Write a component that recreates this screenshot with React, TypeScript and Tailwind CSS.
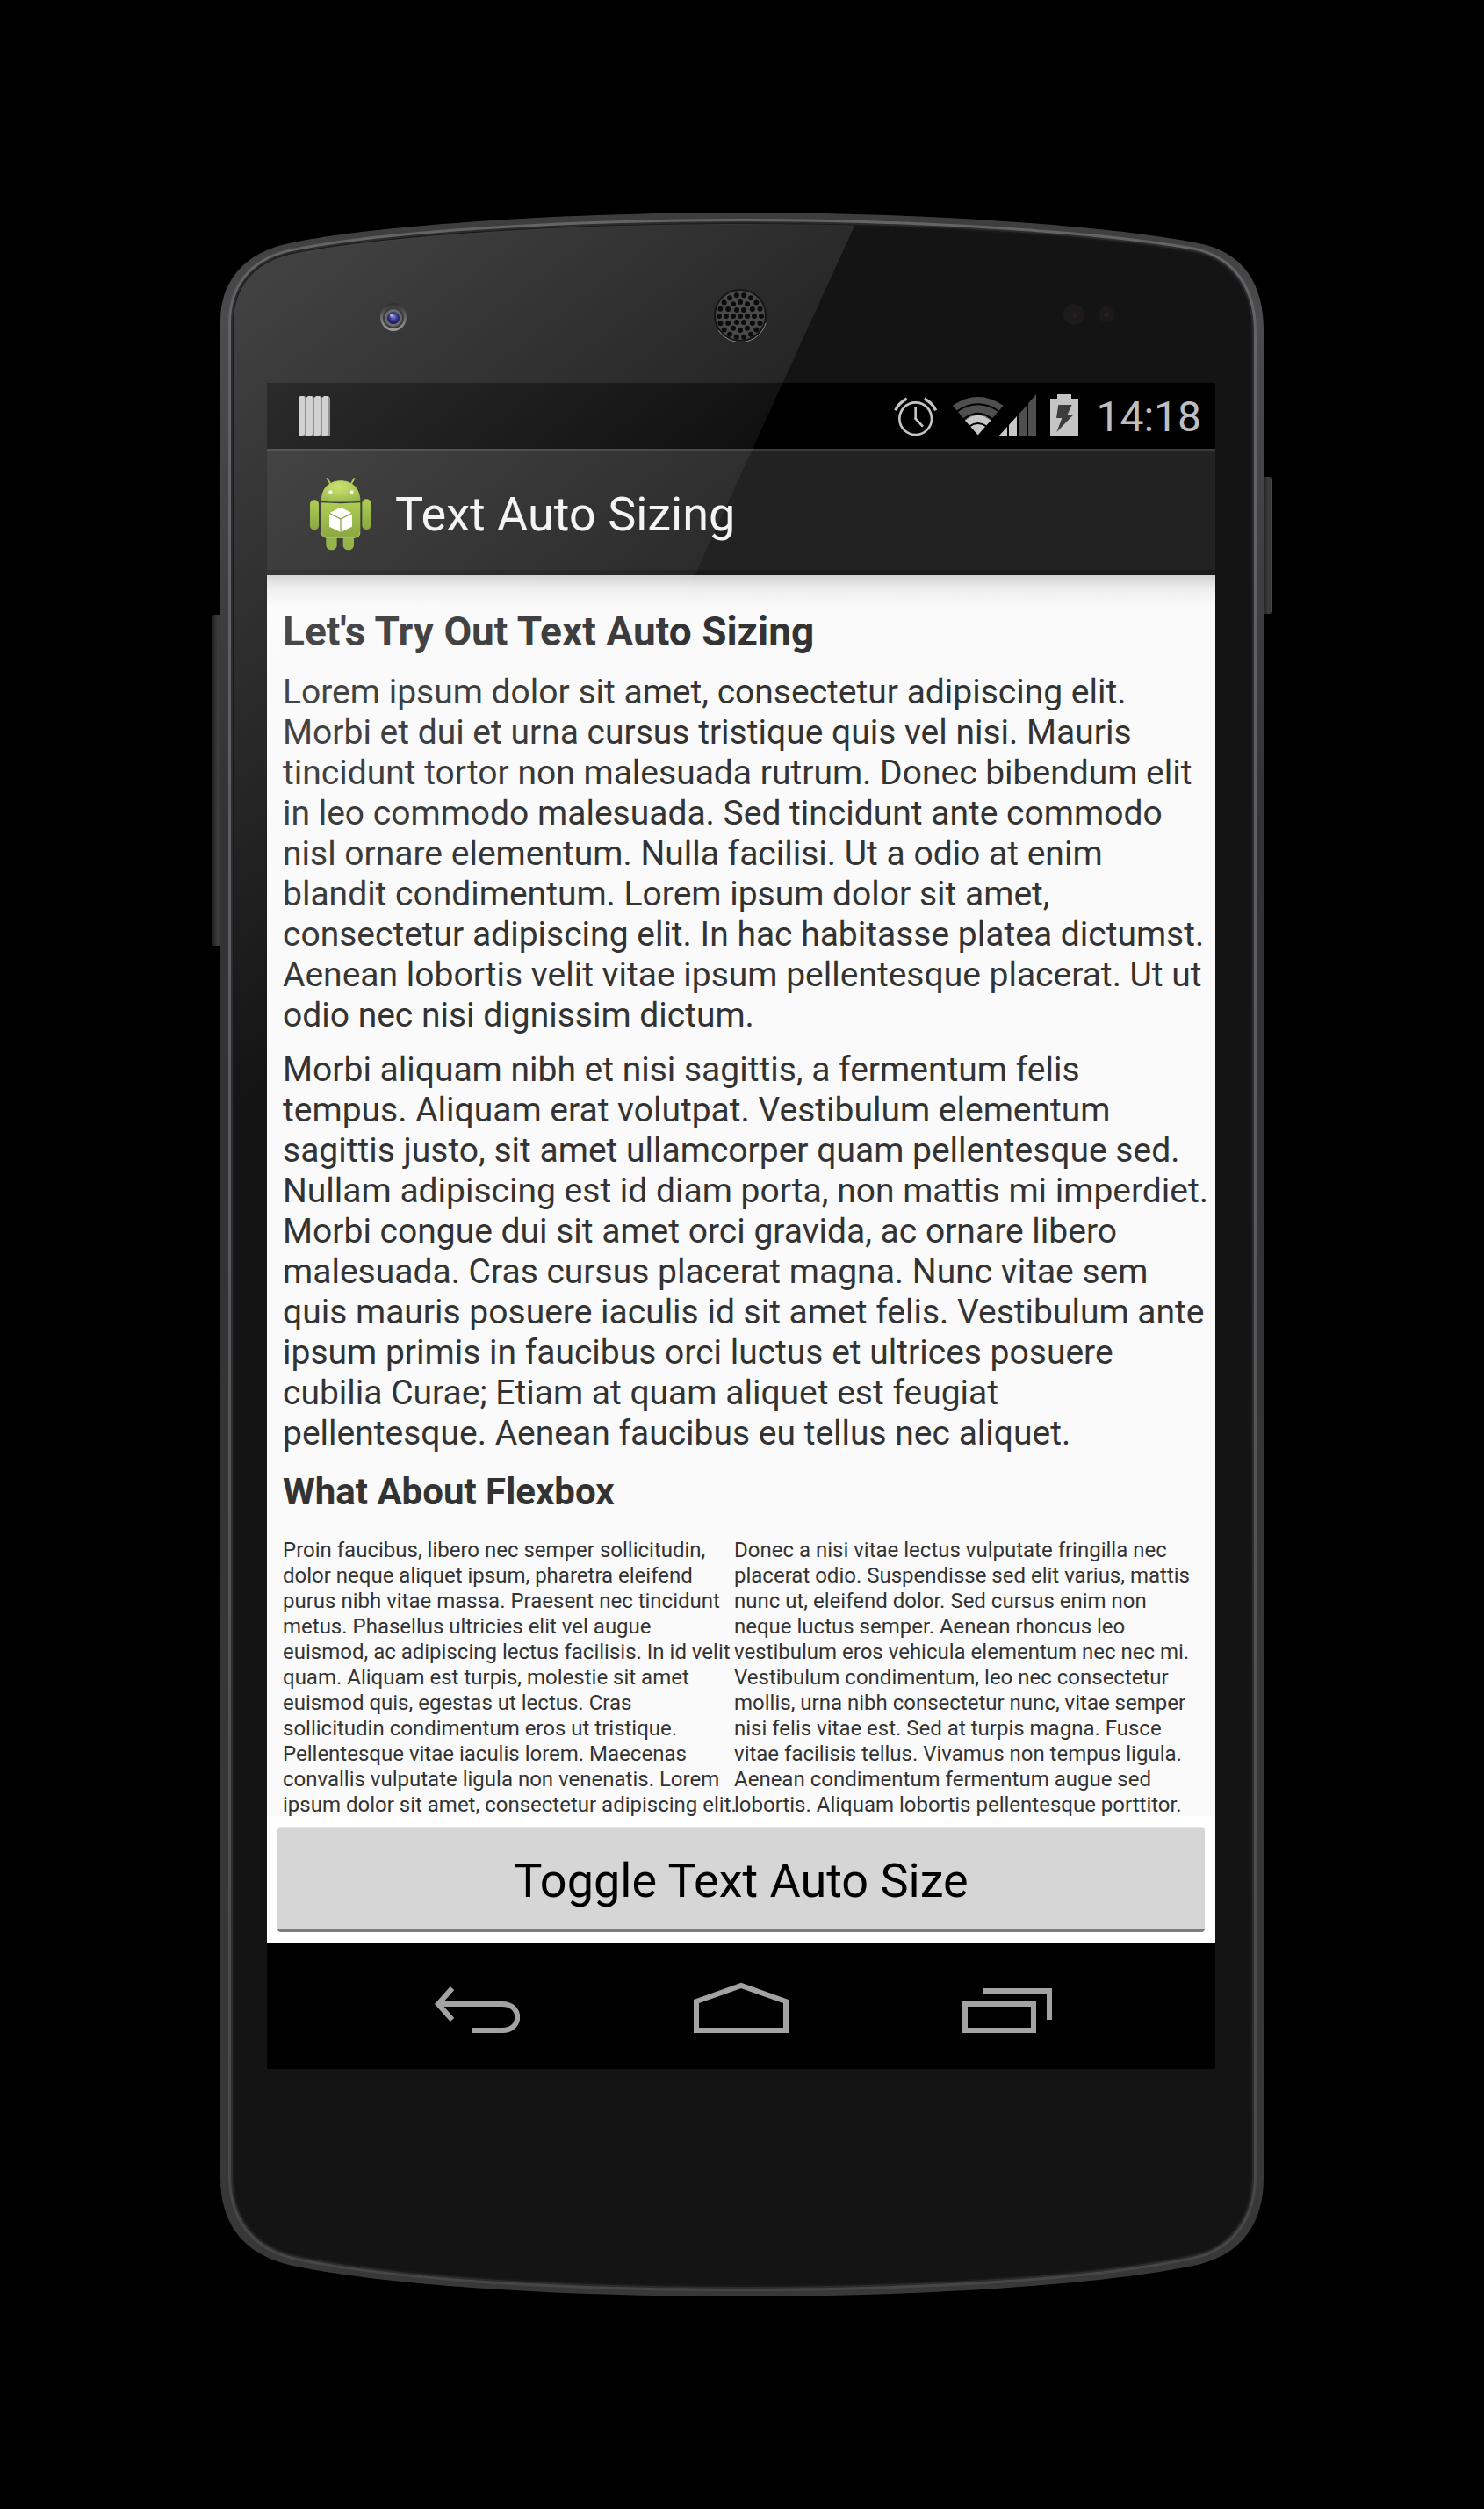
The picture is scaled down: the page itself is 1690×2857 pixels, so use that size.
import React from "react";

const PARAGRAPH_ONE = [
  "Lorem ipsum dolor sit amet, consectetur adipiscing elit.",
  "Morbi et dui et urna cursus tristique quis vel nisi. Mauris",
  "tincidunt tortor non malesuada rutrum. Donec bibendum elit",
  "in leo commodo malesuada. Sed tincidunt ante commodo",
  "nisl ornare elementum. Nulla facilisi. Ut a odio at enim",
  "blandit condimentum. Lorem ipsum dolor sit amet,",
  "consectetur adipiscing elit. In hac habitasse platea dictumst.",
  "Aenean lobortis velit vitae ipsum pellentesque placerat. Ut ut",
  "odio nec nisi dignissim dictum.",
];

const PARAGRAPH_TWO = [
  "Morbi aliquam nibh et nisi sagittis, a fermentum felis",
  "tempus. Aliquam erat volutpat. Vestibulum elementum",
  "sagittis justo, sit amet ullamcorper quam pellentesque sed.",
  "Nullam adipiscing est id diam porta, non mattis mi imperdiet.",
  "Morbi congue dui sit amet orci gravida, ac ornare libero",
  "malesuada. Cras cursus placerat magna. Nunc vitae sem",
  "quis mauris posuere iaculis id sit amet felis. Vestibulum ante",
  "ipsum primis in faucibus orci luctus et ultrices posuere",
  "cubilia Curae; Etiam at quam aliquet est feugiat",
  "pellentesque. Aenean faucibus eu tellus nec aliquet.",
];

const COLUMN_ONE = [
  "Proin faucibus, libero nec semper sollicitudin,",
  "dolor neque aliquet ipsum, pharetra eleifend",
  "purus nibh vitae massa. Praesent nec tincidunt",
  "metus. Phasellus ultricies elit vel augue",
  "euismod, ac adipiscing lectus facilisis. In id velit",
  "quam. Aliquam est turpis, molestie sit amet",
  "euismod quis, egestas ut lectus. Cras",
  "sollicitudin condimentum eros ut tristique.",
  "Pellentesque vitae iaculis lorem. Maecenas",
  "convallis vulputate ligula non venenatis. Lorem",
  "ipsum dolor sit amet, consectetur adipiscing elit.",
];

const COLUMN_TWO = [
  "Donec a nisi vitae lectus vulputate fringilla nec",
  "placerat odio. Suspendisse sed elit varius, mattis",
  "nunc ut, eleifend dolor. Sed cursus enim non",
  "neque luctus semper. Aenean rhoncus leo",
  "vestibulum eros vehicula elementum nec nec mi.",
  "Vestibulum condimentum, leo nec consectetur",
  "mollis, urna nibh consectetur nunc, vitae semper",
  "nisi felis vitae est. Sed at turpis magna. Fusce",
  "vitae facilisis tellus. Vivamus non tempus ligula.",
  "Aenean condimentum fermentum augue sed",
  "lobortis. Aliquam lobortis pellentesque porttitor.",
];

function Lines({ lines }: { lines: string[] }) {
  return (
    <>
      {lines.map((line) => (
        <span key={line} className="block whitespace-nowrap">
          {line}{" "}
        </span>
      ))}
    </>
  );
}

const OUTER =
  "M251 420 V365 C251 322 277 289 325 278 C420 257 640 242 845 242 C1050 242 1265 257 1365 277 C1417 287 1439 325 1439 375 V2480 C1439 2530 1416 2566 1364 2579 C1250 2603 1040 2615 845 2615 C650 2615 450 2604 333 2580 C275 2567 251 2530 251 2480 Z";
const GLASS =
  "M266 420 V368 C266 328 288 300 329 290 C430 268 650 255 845 255 C1040 255 1250 268 1361 288 C1404 298 1425 332 1425 378 V2478 C1425 2520 1404 2557 1358 2567 C1240 2592 1040 2603 845 2603 C650 2603 450 2592 338 2568 C288 2557 266 2522 266 2478 Z";

function PhoneFrame() {
  return (
    <svg
      aria-hidden="true"
      viewBox="240 240 1210 2378"
      preserveAspectRatio="none"
      className="absolute inset-0 h-full w-full"
    >
      <defs>
        <linearGradient id="rim" x1="0" y1="0" x2="0" y2="1">
          <stop offset="0" stopColor="#3d3c3d" />
          <stop offset="0.05" stopColor="#4c4b4d" />
          <stop offset="0.3" stopColor="#323234" />
          <stop offset="1" stopColor="#383838" />
        </linearGradient>
        <linearGradient id="rim-highlight" x1="0" y1="0" x2="0" y2="1">
          <stop offset="0" stopColor="#646366" />
          <stop offset="0.35" stopColor="#5e5d62" />
          <stop offset="1" stopColor="#464646" />
        </linearGradient>
        <linearGradient id="key" x1="0" y1="0" x2="1" y2="0">
          <stop offset="0" stopColor="#1c1c1c" />
          <stop offset="0.6" stopColor="#3e3e3e" />
          <stop offset="1" stopColor="#262626" />
        </linearGradient>
      </defs>
      <rect x="241" y="700" width="12" height="377" rx="2" fill="url(#key)" />
      <rect x="1438" y="543" width="11" height="156" rx="2" fill="url(#key)" />
      <path d="M1448 545V697" stroke="#6a6a6a" strokeWidth="1" />
      <path d={OUTER} fill="url(#rim)" />
      <path d={GLASS} fill="none" stroke="url(#rim-highlight)" strokeWidth="12" />
      <path d={GLASS} fill="none" stroke="#2c2c2e" strokeWidth="6" />
      <path d={GLASS} fill="#141414" stroke="#19191a" strokeWidth="2" />
    </svg>
  );
}

function earpieceHoles() {
  const holes: { x: number; y: number }[] = [{ x: 843, y: 360 }];
  [
    [8, 6],
    [16, 12],
    [24, 18],
  ].forEach(([radius, count]) => {
    for (let i = 0; i < count; i += 1) {
      const angle = (i / count) * Math.PI * 2;
      holes.push({
        x: 843 + radius * Math.cos(angle),
        y: 360 + radius * Math.sin(angle),
      });
    }
  });
  return holes;
}

function PhoneGloss() {
  return (
    <svg
      aria-hidden="true"
      viewBox="240 240 1210 2378"
      preserveAspectRatio="none"
      className="pointer-events-none absolute inset-0 h-full w-full"
    >
      <defs>
        <linearGradient
          id="gloss"
          gradientUnits="userSpaceOnUse"
          x1="266"
          y1="360"
          x2="706"
          y2="929"
        >
          <stop offset="0" stopColor="#fff" stopOpacity="0.19" />
          <stop offset="1" stopColor="#fff" stopOpacity="0" />
        </linearGradient>
        <clipPath id="glass-clip">
          <path d={GLASS} />
        </clipPath>
        <radialGradient id="lens" cx="0.5" cy="0.4" r="0.6">
          <stop offset="0" stopColor="#8a94b8" />
          <stop offset="0.5" stopColor="#3a38a0" />
          <stop offset="1" stopColor="#15152c" />
        </radialGradient>
        <linearGradient id="ring" x1="0" y1="0" x2="0" y2="1">
          <stop offset="0" stopColor="#2e2e2e" />
          <stop offset="1" stopColor="#a0a0a0" />
        </linearGradient>
      </defs>
      <path
        d="M240 240 H981 L496 1300 H240 Z"
        fill="url(#gloss)"
        clipPath="url(#glass-clip)"
      />
      <ellipse cx="448" cy="361" rx="15" ry="16" fill="url(#ring)" />
      <circle cx="448" cy="362" r="12" fill="#3d3d3e" />
      <circle cx="448" cy="362" r="10" fill="#6a6a6c" />
      <circle cx="448" cy="362" r="7" fill="url(#lens)" />
      <circle cx="446" cy="359" r="2" fill="#aab2cc" />
      <circle cx="843" cy="359" r="29" fill="#4a4a4a" stroke="#151515" strokeWidth="2" />
      <path d="M818 376 A30 30 0 0 0 872 368" fill="none" stroke="#8a8a8a" strokeWidth="1" />
      {earpieceHoles().map((hole, index) => (
        <circle key={index} cx={hole.x} cy={hole.y} r="3" fill="#0b0b0b" />
      ))}
      <circle cx="1223" cy="358" r="12" fill="#1c1b1b" />
      <circle cx="1224" cy="359" r="3" fill="#2c1e1b" />
      <circle cx="1260" cy="358" r="9" fill="#1b1a1a" />
      <circle cx="1260" cy="358" r="3" fill="#2c1e1b" />
    </svg>
  );
}

function LogIcon() {
  return (
    <svg aria-hidden="true" viewBox="0 0 36 46" className="h-[46px] w-9">
      {[0, 9, 18, 27].map((x) => (
        <g key={x}>
          <path d={`M${x} 2l2-2h5l2 2v44H${x}z`} fill="#7d7d7d" />
          <path d={`M${x} 2l2-2h4l1 2v41l-2 2H${x}z`} fill="#cacaca" />
        </g>
      ))}
    </svg>
  );
}

function AlarmIcon() {
  return (
    <svg aria-hidden="true" viewBox="83 60 147 138" className="h-[46px] w-[49px]" fill="none" stroke="#c4c4c4">
      <circle cx="157" cy="137" r="55" strokeWidth="8" />
      <path d="M157 97V139" strokeWidth="8" />
      <path d="M155 135L182 164" strokeWidth="8" />
      <path d="M88 109Q99 84 127 69" strokeWidth="10" />
      <path d="M226 109Q215 84 187 69" strokeWidth="10" />
    </svg>
  );
}

function SignalIcons() {
  return (
    <svg aria-hidden="true" viewBox="282 54 288 144" className="h-12 w-24">
      <path d="M284 92Q371 34 458 92L371 193Z" fill="#4f4f4f" />
      <path d="M327 143Q371 107 415 143L371 193Z" fill="#c8c8c8" />
      <path d="M300 112Q371 64 442 112M322 139Q371 99 420 139M342 163Q371 143 400 163" fill="none" stroke="#000" strokeWidth="6" />
      <path d="M441 198L471 165V198Z" fill="#c8c8c8" />
      <path d="M477 158L504 129V198H477Z" fill="#c8c8c8" />
      <path d="M510 122L537 93V198H510Z" fill="#4f4f4f" />
      <path d="M543 85L570 54V198H543Z" fill="#4f4f4f" />
    </svg>
  );
}

function BatteryIcon() {
  return (
    <svg aria-hidden="true" viewBox="618 51 96 144" className="h-12 w-8">
      <path d="M618 66H642V51H690V66H714V195H618Z" fill="#c4c4c4" />
      <path d="M646 87H692L677 120H698L640 180L658 132H639Z" fill="#3c3c3c" />
    </svg>
  );
}

function AndroidIcon() {
  return (
    <svg aria-hidden="true" viewBox="38 62 216 255" className="h-[85px] w-[72px]">
      <defs>
        <linearGradient id="droid" x1="0" y1="0" x2="0" y2="1">
          <stop offset="0" stopColor="#a3c63c" />
          <stop offset="1" stopColor="#7a9c28" />
        </linearGradient>
        <radialGradient id="droid-head" cx="0.45" cy="0.3" r="0.8">
          <stop offset="0" stopColor="#c3e05a" />
          <stop offset="1" stopColor="#88ab30" />
        </radialGradient>
      </defs>
      <path d="M100 68L113 89M192 68L180 89" stroke="#9dbd40" strokeWidth="6" strokeLinecap="round" />
      <path d="M79 145C79 100 108 75 146 75S213 100 213 145Q146 150 79 145Z" fill="url(#droid-head)" />
      <circle cx="111" cy="114" r="6" fill="#fff" />
      <circle cx="184" cy="114" r="6" fill="#fff" />
      <rect x="96" y="245" width="37" height="67" rx="17" fill="#86a930" />
      <rect x="154" y="245" width="37" height="67" rx="17" fill="#86a930" />
      <rect x="41" y="141" width="30" height="102" rx="14" fill="url(#droid)" />
      <rect x="219" y="138" width="30" height="104" rx="14" fill="url(#droid)" />
      <path d="M79 150Q146 155 213 150V250Q213 271 190 271H102Q79 271 79 250Z" fill="url(#droid)" />
      <path d="M80 251Q82 270 102 270H190Q211 270 212 251" fill="none" stroke="#b6cc77" strokeWidth="2" />
      <path d="M146 166L185 186V232L146 251L107 232V186Z" fill="#fff" />
      <path d="M107 186L146 206L185 186M146 206V251" fill="none" stroke="#7b9c2c" strokeWidth="4" />
    </svg>
  );
}

function StatusBar() {
  return (
    <div className="flex h-[75px] items-end justify-between bg-black pr-4 pb-[14px] pl-9">
      <LogIcon />
      <div className="flex items-end">
        <AlarmIcon />
        <span className="w-[17px]" />
        <SignalIcons />
        <span className="w-4" />
        <BatteryIcon />
        <time className="ml-5 text-[48px] leading-[44px] text-[#bebebe]">14:18</time>
      </div>
    </div>
  );
}

function NavBar() {
  return (
    <nav className="flex h-36 items-center justify-between bg-black pt-1 pr-[186px] pl-[190px] text-[#a3a3a3]">
      <button type="button" aria-label="Back">
        <svg aria-hidden="true" viewBox="0 0 98 58" className="h-[58px] w-[98px]" fill="none" stroke="currentColor" strokeWidth="6">
          <path d="M21 7L5 25L21 43" />
          <path d="M6 25H78C101 25 101 55 78 55H44" />
        </svg>
      </button>
      <button type="button" aria-label="Home">
        <svg aria-hidden="true" viewBox="0 0 108 58" className="h-[58px] w-[108px]" fill="none" stroke="currentColor" strokeWidth="6">
          <path d="M3 55V22L54 4L105 22V55Z" />
        </svg>
      </button>
      <button type="button" aria-label="Recent apps">
        <svg aria-hidden="true" viewBox="0 0 102 58" className="h-[58px] w-[102px]" fill="none" stroke="currentColor" strokeWidth="6">
          <path d="M3 25H81V55H3Z" />
          <path d="M24 10H99V43" />
        </svg>
      </button>
    </nav>
  );
}

export default function App() {
  return (
    <div className="flex min-h-screen justify-center bg-black pt-60 font-['Roboto',sans-serif]">
      <div className="relative mb-60 w-full max-w-[1210px] self-start pt-[196px] pr-[66px] pb-[262px] pl-16">
        <PhoneFrame />
        <div className="relative flex flex-col overflow-hidden bg-white">
          <StatusBar />
          <header className="flex h-36 items-center border-t-[3px] border-b-[6px] border-t-[#3a3a3a] border-b-[#1a1a1a] bg-[#222222] pt-2 pl-12">
            <AndroidIcon />
            <h1 className="ml-[26px] text-[54px] leading-[64px] text-[#f3f3f3]">Text Auto Sizing</h1>
          </header>
          <main className="h-[1413px] overflow-hidden bg-[#fafafa] text-[#333333]">
            <div className="h-9 bg-linear-to-b from-[#d0d0d0] via-[#ededed] via-40% to-[#fafafa]" />
            <div className="px-[18px]">
              <h2 className="text-[46px] leading-[56px] font-bold">Let's Try Out Text Auto Sizing</h2>
              <p className="mt-[18px] text-[39px] leading-[46px]">
                <Lines lines={PARAGRAPH_ONE} />
              </p>
              <p className="mt-4 text-[39px] leading-[46px]">
                <Lines lines={PARAGRAPH_TWO} />
              </p>
              <h2 className="mt-5 text-[42px] leading-[48px] font-bold">What About Flexbox</h2>
              <div className="mt-7 grid grid-cols-[514px_1fr] text-[24px] leading-[29px]">
                <p>
                  <Lines lines={COLUMN_ONE} />
                </p>
                <p>
                  <Lines lines={COLUMN_TWO} />
                </p>
              </div>
            </div>
          </main>
          <div className="bg-white p-3">
            <button
              type="button"
              className="block h-[120px] w-full rounded-sm border-t-2 border-b-[3px] border-t-[#e4e4e4] border-b-[#7c7c7c] bg-[#d6d6d6] pt-1 text-[54px] leading-[64px] text-black"
            >
              Toggle Text Auto Size
            </button>
          </div>
          <NavBar />
        </div>
        <PhoneGloss />
      </div>
    </div>
  );
}
